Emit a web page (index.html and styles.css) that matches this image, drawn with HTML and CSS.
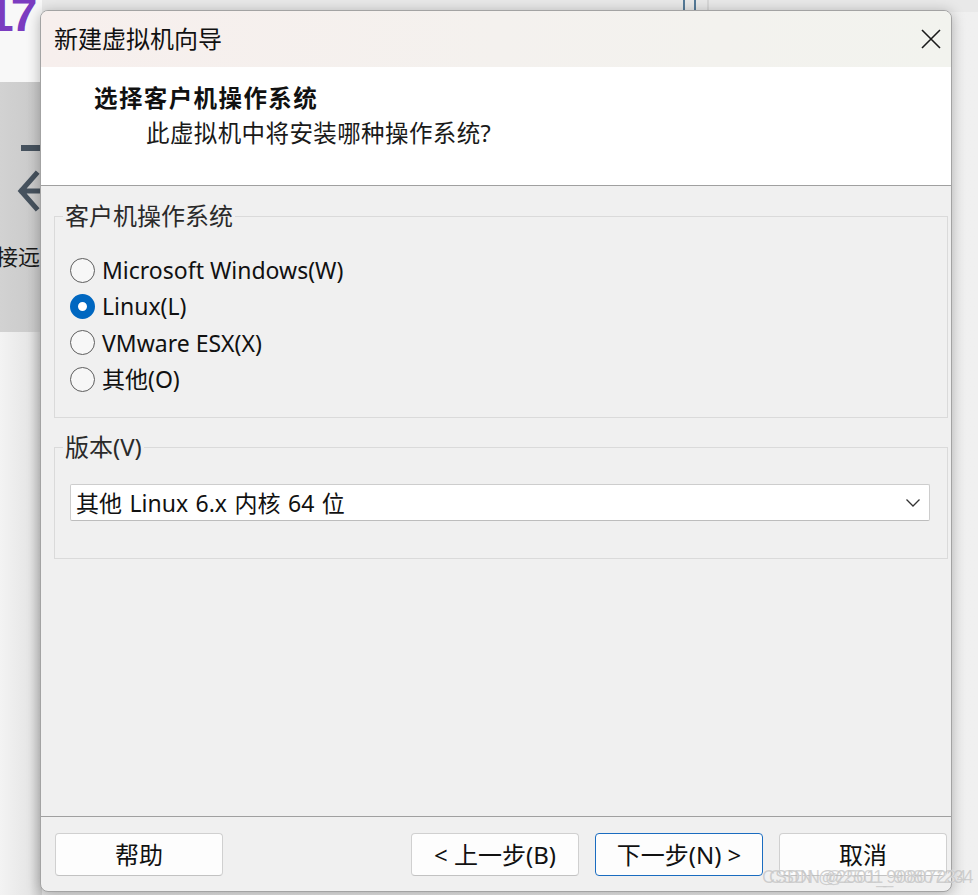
FILE: index.html
```html
<!DOCTYPE html>
<html lang="zh-CN">
<head>
<meta charset="utf-8">
<title>新建虚拟机向导</title>
<link rel="stylesheet" href="styles.css">
</head>
<body>
<div class="screen">
  <div class="bg-app">
    <div class="bg-logo-area"><span class="bg-logo">17</span></div>
    <div class="bg-side">
      <svg class="bg-arrow" width="40" height="80" viewBox="0 0 40 80">
        <rect x="21" y="0" width="19" height="6" fill="#46525e"/>
        <path d="M40 46 H22 M36 29 L21 46 L36 63" fill="none" stroke="#46525e" stroke-width="5" stroke-linecap="square"/>
      </svg>
      <div class="bg-side-label">接远</div>
    </div>
    <div class="bg-rest"></div>
  </div>
  <div class="bg-top"><span class="tick"></span><span class="tick"></span><span class="tick light"></span></div>

  <div class="dialog">
    <div class="titlebar">
      <span class="title">新建虚拟机向导</span>
      <span class="close" aria-label="关闭">
        <svg width="20" height="20" viewBox="0 0 20 20"><path d="M1 1 L19 19 M19 1 L1 19" stroke="#1a1a1a" stroke-width="1.6" fill="none"/></svg>
      </span>
    </div>
    <div class="header">
      <div class="h-title">选择客户机操作系统</div>
      <div class="h-sub">此虚拟机中将安装哪种操作系统?</div>
    </div>
    <div class="content">
      <fieldset class="group group-os">
        <legend>客户机操作系统</legend>
        <label class="radio"><span class="circle"></span><span class="rlabel">Microsoft Windows(W)</span></label>
        <label class="radio checked"><span class="circle"></span><span class="rlabel">Linux(L)</span></label>
        <label class="radio"><span class="circle"></span><span class="rlabel">VMware ESX(X)</span></label>
        <label class="radio"><span class="circle"></span><span class="rlabel">其他(O)</span></label>
      </fieldset>
      <fieldset class="group group-ver">
        <legend>版本(V)</legend>
        <div class="select">
          <span class="select-text">其他 Linux 6.x 内核 64 位</span>
          <svg class="chev" width="14" height="8" viewBox="0 0 14 8"><path d="M0.5 0.5 L7 7 L13.5 0.5" fill="none" stroke="#333" stroke-width="1.3"/></svg>
        </div>
      </fieldset>
    </div>
    <div class="footer">
      <span class="btn">帮助</span>
      <span class="spacer"></span>
      <span class="btn">&lt; 上一步(B)</span>
      <span class="btn primary">下一步(N) &gt;</span>
      <span class="btn">取消</span>
    </div>
  </div>

  <div class="watermark">CSDN @2501_90807234</div>
</div>
</body>
</html>
```
FILE: styles.css
```css
* { box-sizing: border-box; }
html, body { margin: 0; padding: 0; }
body {
  width: 978px;
  height: 895px;
  overflow: hidden;
  background: #ececec;
  font-family: "Noto Sans", "Noto Sans CJK SC", sans-serif;
  color: #1a1a1a;
}
.screen {
  position: relative;
  width: 978px;
  height: 895px;
  overflow: hidden;
  background: linear-gradient(to right, #e4e4e4 0, #f0f0f0 100%);
}

/* background application (behind the dialog) */
.bg-app {
  position: absolute;
  left: 0;
  top: 0;
  width: 42px;
  height: 895px;
  display: flex;
  flex-direction: column;
}
.bg-logo-area {
  height: 82px;
  background: #f8f8f8;
  overflow: hidden;
}
.bg-logo {
  display: block;
  font-family: "Liberation Sans", sans-serif;
  font-weight: bold;
  font-size: 48px;
  line-height: 1;
  color: #7b3cc0;
  margin-left: -13px;
  margin-top: -9px;
  letter-spacing: -3px;
}
.bg-side {
  height: 250px;
  background: linear-gradient(to right, #d2d2d2, #c9c9c9);
  padding-top: 63px;
  overflow: hidden;
}
.bg-arrow { display: block; }
.bg-side-label {
  margin-top: 17px;
  margin-left: -4px;
  font-size: 22px;
  line-height: 28px;
  white-space: nowrap;
  color: #1a1a1a;
}
.bg-rest {
  flex: 1;
  background: linear-gradient(to right, #f3f3f3 0, #e6e6e6 70%, #cfcfcf 100%);
}
.bg-top {
  position: absolute;
  left: 42px;
  right: 0;
  top: 0;
  height: 12px;
  background: #e9e9e9;
  display: flex;
  padding-left: 641px;
  gap: 9px;
}
.tick { width: 2px; height: 12px; background: #557a98; }
.tick.light { background: #d8d8d8; margin-left: 2px; }

/* dialog */
.dialog {
  position: absolute;
  left: 40px;
  top: 10px;
  width: 912px;
  height: 882px;
  border: 1px solid #a3a3a3;
  border-radius: 8px;
  overflow: hidden;
  background: #f0f0f0;
  box-shadow: 0 2px 14px rgba(0, 0, 0, 0.28);
  display: flex;
  flex-direction: column;
}
.titlebar {
  height: 56px;
  flex: none;
  background: linear-gradient(to right, #f7efed 0, #f4f1ee 50%, #f2f3ee 100%);
  display: flex;
  align-items: center;
  padding-left: 13px;
  padding-right: 10px;
}
.title {
  font-size: 24px;
  line-height: 30px;
  color: #111;
  flex: 1;
}
.close { display: flex; width: 20px; height: 20px; }

.header {
  height: 119px;
  flex: none;
  background: #ffffff;
  border-bottom: 1px solid #a0a0a0;
  padding-top: 16px;
}
.h-title {
  padding-left: 53px;
  font-size: 23.5px;
  font-weight: bold;
  letter-spacing: 1.4px;
  line-height: 30px;
  color: #111;
}
.h-sub {
  padding-left: 105px;
  margin-top: 5px;
  font-size: 23.5px;
  letter-spacing: 0.4px;
  line-height: 30px;
  color: #1a1a1a;
}

.content {
  flex: 1;
  padding: 17px 3px 0 13px;
}
.group {
  margin: 0;
  border: 1px solid #dadada;
  padding: 0;
  min-width: 0;
}
.group legend {
  margin-left: -7px;
  padding: 0 2px;
  font-size: 24px;
  line-height: 26px;
  color: #2a2a2a;
}
.group-os { padding: 23px 15px 20px 15px; }
.radio {
  height: 36.3px;
  display: flex;
  align-items: center;
  gap: 7px;
}
.circle {
  width: 25px;
  height: 25px;
  border-radius: 50%;
  border: 1.5px solid #5e5e5e;
  background: #f7f7f7;
  flex: none;
}
.radio.checked .circle {
  border: 8px solid #0067c0;
  background: #ffffff;
}
.rlabel {
  font-size: 23px;
  line-height: 30px;
  color: #111;
}
.group-ver {
  margin-top: 16px;
  padding: 24px 17px 37px 15px;
}
.select {
  height: 37px;
  background: #ffffff;
  border: 1px solid #cdcdcd;
  border-bottom-color: #bdbdbd;
  border-radius: 2px;
  display: flex;
  align-items: center;
  padding: 0 9px 0 5px;
}
.select-text {
  flex: 1;
  font-size: 23px;
  line-height: 30px;
  word-spacing: 1.5px;
  color: #111;
  white-space: pre;
}
.chev { display: block; }

.footer {
  height: 75px;
  flex: none;
  border-top: 1px solid #a0a0a0;
  display: flex;
  align-items: flex-start;
  padding: 16px 4px 0 14px;
  gap: 16px;
}
.spacer { flex: 1; }
.btn {
  width: 168px;
  height: 43px;
  background: #fdfdfd;
  border: 1px solid #d0d0d0;
  border-bottom-color: #c2c2c2;
  border-radius: 4px;
  display: flex;
  align-items: center;
  justify-content: center;
  font-size: 24px;
  line-height: 28px;
  color: #111;
}
.btn.primary {
  border: 1.5px solid #1a6cc0;
}

.watermark {
  position: absolute;
  left: 762px;
  top: 868px;
  font-family: "Liberation Sans", sans-serif;
  font-size: 18px;
  line-height: 18px;
  color: rgba(200, 200, 200, 0.9);
  text-shadow: 7px 0 0 rgba(185, 185, 185, 0.6), 0 0 1px #ffffff;
  white-space: nowrap;
}
```
